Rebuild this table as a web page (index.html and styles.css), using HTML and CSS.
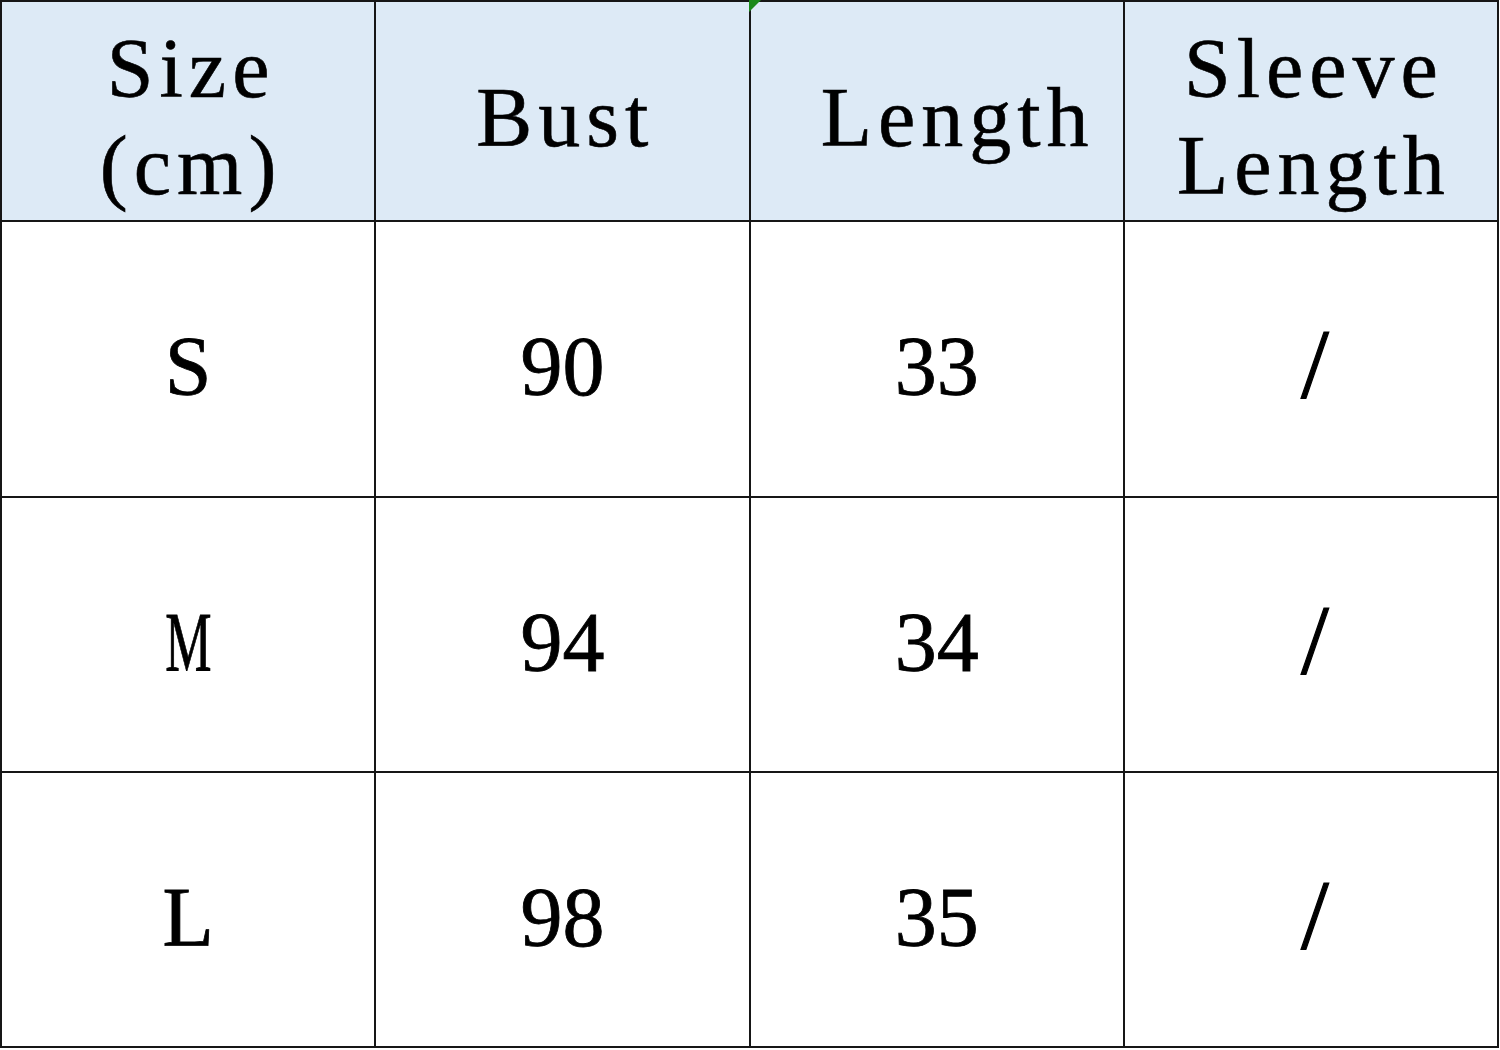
FILE: index.html
```html
<!DOCTYPE html>
<html>
<head>
<meta charset="utf-8">
<link rel="stylesheet" href="styles.css">
</head>
<body>
<div class="chart">
  <div class="cell head"><span>Size</span><span>(cm)</span></div>
  <div class="cell head"><span>Bust</span></div>
  <div class="cell head len"><span class="flag"></span><span>Length</span></div>
  <div class="cell head"><span>Sleeve</span><span>Length</span></div>

  <div class="cell">S</div>
  <div class="cell">90</div>
  <div class="cell">33</div>
  <div class="cell slash">/</div>

  <div class="cell"><span class="narrow">M</span></div>
  <div class="cell">94</div>
  <div class="cell">34</div>
  <div class="cell slash">/</div>

  <div class="cell">L</div>
  <div class="cell">98</div>
  <div class="cell">35</div>
  <div class="cell slash">/</div>
</div>
</body>
</html>
```
FILE: styles.css
```css
html, body {
  margin: 0;
  padding: 0;
  background: #ffffff;
}

.chart {
  width: 1499px;
  box-sizing: border-box;
  padding: 2px;
  display: grid;
  grid-template-columns: repeat(4, 1fr);
  grid-template-rows: 218px 274px 273px 273px;
  gap: 2px;
  background: #161616;
  font-family: "Liberation Serif", "Times New Roman", serif;
  color: #000;
}

.cell {
  background: #ffffff;
  display: flex;
  flex-direction: column;
  align-items: center;
  justify-content: center;
  font-size: 84px;
  line-height: 1;
  padding-top: 16px;
  box-sizing: border-box;
  -webkit-text-stroke: 0.8px #000;
}

.head {
  background: #ddeaf6;
  letter-spacing: 6px;
  padding-left: 6px;
  padding-top: 12px;
  -webkit-text-stroke: 0.6px #000;
}

.head span {
  display: block;
  line-height: 97px;
}

.narrow {
  display: inline-block;
  transform: scaleX(0.62);
}

.slash {
  font-size: 100px;
  padding-top: 10px;
  padding-left: 8px;
  -webkit-text-stroke: 1.2px #000;
}

.len {
  position: relative;
  padding-left: 42px;
}

.len .flag {
  position: absolute;
  left: -2px;
  top: -2px;
  width: 0;
  height: 0;
  line-height: 0;
  border-top: 12px solid #1a8a1a;
  border-right: 12px solid transparent;
}
```
